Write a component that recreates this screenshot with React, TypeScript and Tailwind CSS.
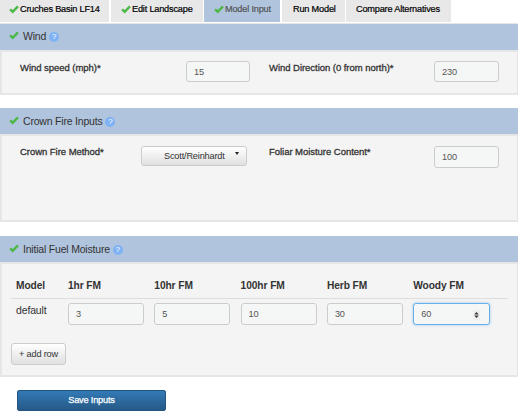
import type { ReactNode } from 'react';

function Check({ className = '' }: { className?: string }) {
  return (
    <svg viewBox="0 0 20 17" className={`block h-[9px] w-[10px] shrink-0 ${className}`}>
      <path d="M0.5 9.8 L3.8 6.4 L7.5 9.6 L16.2 0.4 L19.6 3.8 L7.5 16.4 Z" fill="#4db848" />
    </svg>
  );
}

function Tab({ label, className, done }: { label: string; className: string; done?: boolean }) {
  return (
    <div className={`flex h-[22px] shrink-0 items-start ${className}`}>
      {done && <Check className="mr-px mt-[5px]" />}
      <span className="mt-[4px] whitespace-nowrap text-[9.2px] leading-[11px] tracking-[-0.2px] [-webkit-text-stroke:0.2px]">
        {label}
      </span>
    </div>
  );
}

function Section({
  title,
  className,
  headerClass = '',
  children,
}: {
  title: string;
  className: string;
  headerClass?: string;
  children: ReactNode;
}) {
  return (
    <section className={`flex flex-col ${className}`}>
      <header className={`flex h-[26px] shrink-0 items-start bg-[#b0c4de] pl-[9px] ${headerClass}`}>
        <Check className="mt-[7px]" />
        <h2 className="ml-[4px] mt-[6px] text-[10.5px] leading-[13px] tracking-[-0.2px] text-[#333]">{title}</h2>
        <span className="ml-[3px] mt-[8px] flex size-[10px] items-center justify-center rounded-full bg-[#7fb2f5] text-[8px] leading-[10px] text-white">
          ?
        </span>
      </header>
      <div className="min-h-0 flex-1 border-2 border-r border-[#e6e6e6] bg-[#f4f4f4]">{children}</div>
    </section>
  );
}

function Field({ value, className = '' }: { value: string; className?: string }) {
  return (
    <input
      readOnly
      value={value}
      className={`block shrink-0 rounded-[3px] border border-[#ccc] bg-[#f5f7f7] pl-[7px] text-[9.2px] tracking-[-0.15px] text-[#555] outline-none ${className}`}
    />
  );
}

function Label({ children, className }: { children: ReactNode; className: string }) {
  return (
    <label className={`shrink-0 whitespace-nowrap text-[9.5px] leading-[11px] tracking-[-0.04px] text-[#333] [-webkit-text-stroke:0.3px] ${className}`}>
      {children}
    </label>
  );
}

const fuel = [
  { name: '1hr FM', value: '3' },
  { name: '10hr FM', value: '5' },
  { name: '100hr FM', value: '10' },
  { name: 'Herb FM', value: '30' },
];

export default function App() {
  return (
    <main className="flex h-[416px] w-[518px] flex-col overflow-hidden bg-white font-['Liberation_Sans',Arial,sans-serif] text-[#333]">
      <nav className="flex h-[24px] shrink-0 border-b border-[#e6e6e6] text-black">
        <Tab done label="Cruches Basin LF14" className="mr-[2px] w-[109px] bg-[#e8e8e8] pl-[9px]" />
        <Tab done label="Edit Landscape" className="mr-px w-[92px] bg-[#e8e8e8] pl-[10px]" />
        <Tab done label="Model Input" className="mr-[2px] w-[76px] bg-[#b0c4de] pl-[10px] text-[#555]" />
        <Tab label="Run Model" className="mr-px w-[63px] bg-[#e8e8e8] pl-[11px]" />
        <Tab label="Compare Alternatives" className="w-[105px] bg-[#e8e8e8] pl-[10px]" />
      </nav>

      <Section title="Wind" className="h-[71px] shrink-0">
        <div className="flex items-start">
          <Label className="ml-[18px] mt-[10px] w-[166px]">Wind speed (mph)*</Label>
          <Field value="15" className="mt-[9px] h-[21px] w-[64px]" />
          <Label className="ml-[19px] mt-[10px] w-[165px]">Wind Direction (0 from north)*</Label>
          <Field value="230" className="mt-[9px] h-[21px] w-[65px]" />
        </div>
      </Section>

      <Section title="Crown Fire Inputs" className="mt-[13px] h-[114px] shrink-0" headerClass="pt-px">
        <div className="flex items-start">
          <Label className="ml-[18px] mt-[10px] w-[121px]">Crown Fire Method*</Label>
          <button className="mt-[10px] flex h-[20px] w-[106px] items-center whitespace-nowrap rounded-[3px] border border-[#ccc] bg-linear-to-b from-white to-[#e0e0e0] pl-[22px] text-[9.2px] leading-[11px] tracking-[-0.18px] text-[#333]">
            Scott/Reinhardt
            <span className="mb-[5px] ml-[10px] border-x-[2.5px] border-t-[3px] border-x-transparent border-t-[#222]" />
          </button>
          <Label className="ml-[22px] mt-[10px] w-[165px]">Foliar Moisture Content*</Label>
          <Field value="100" className="mt-[10px] h-[22px] w-[65px]" />
        </div>
      </Section>

      <Section title="Initial Fuel Moisture" className="mt-[14px] h-[141px] shrink-0" headerClass="pt-px">
        <div className="ml-[9px] w-[497px]">
          <div className="flex h-[35px] items-start border-b border-[#ddd] pt-[15px] text-[10.2px] font-bold leading-[13px] tracking-[-0.08px]">
            <span className="ml-[5px] w-[52px]">Model</span>
            {fuel.map((f) => (
              <span key={f.name} className="w-[86.3px]">{f.name}</span>
            ))}
            <span>Woody FM</span>
          </div>
          <div className="flex items-start">
            <span className="ml-[5px] mt-[5px] w-[52px] text-[10.5px] leading-[13px] tracking-[-0.15px]">default</span>
            {fuel.map((f) => (
              <Field key={f.name} value={f.value} className="mr-[10.3px] mt-[4px] h-[22px] w-[76px]" />
            ))}
            <div className="mt-[4px] flex h-[22px] w-[77px] items-center justify-between rounded-[3px] border border-[#66afe9] bg-[#f5f7f7] pl-[7px] pr-[9px] pt-px text-[9.2px] leading-[11px] tracking-[-0.15px] text-[#555] shadow-[0_0_3px_#66afe999]">
              60
              <span className="flex h-[10px] w-[7px] items-center justify-center bg-[#eee]">
                <svg viewBox="0 0 5 6" className="h-[6px] w-[5px]">
                  <path d="M2.5 0 L4.7 2.6 H0.3 Z M2.5 6 L4.7 3.4 H0.3 Z" fill="#333" />
                </svg>
              </span>
            </div>
          </div>
          <button className="mt-[18px] flex h-[22px] w-[55px] items-center justify-center whitespace-nowrap rounded-[3px] border border-[#ccc] bg-linear-to-b from-white to-[#e0e0e0] text-[9.2px] leading-[11px] tracking-[-0.18px] text-[#333]">
            + add row
          </button>
        </div>
      </Section>

      <button className="ml-[17px] mt-[13px] flex h-[21px] w-[149px] shrink-0 items-center justify-center rounded-[2px] border border-[#245580] bg-linear-to-b from-[#337ab7] to-[#265a88] text-[9.2px] leading-[11px] tracking-[-0.18px] text-white [-webkit-text-stroke:0.25px]">
        Save Inputs
      </button>
    </main>
  );
}
